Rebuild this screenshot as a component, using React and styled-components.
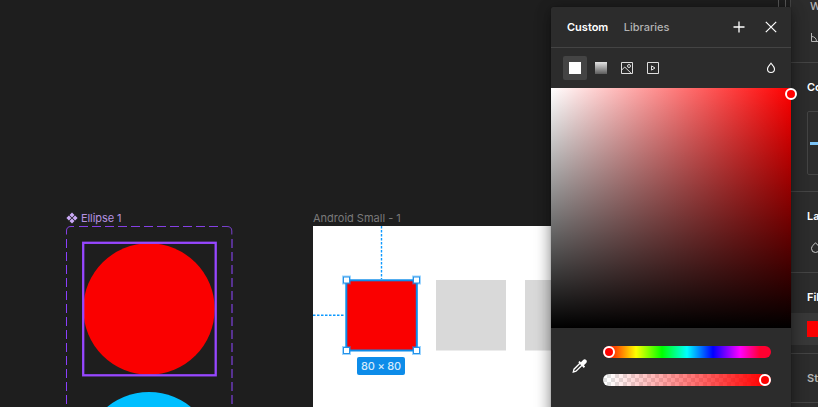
import React from "react";
import styled, { createGlobalStyle } from "styled-components";

const GlobalStyle = createGlobalStyle`
  * { box-sizing: border-box; }
  body {
    margin: 0;
    overflow: hidden;
    background: #1e1e1e;
    font-family: Inter, "Liberation Sans", sans-serif;
    font-size: 11px;
    line-height: 16px;
    color: #fff;
  }
`;

const Editor = styled.div`
  position: relative;
  display: flex;
  width: 818px;
  height: 407px;
  overflow: hidden;
`;

const Canvas = styled.main`
  position: relative;
  flex: none;
  width: 790px;
  height: 407px;
  background: #1e1e1e;
`;

const ScrollTrack = styled.div`
  position: absolute;
  left: 778px;
  top: 0;
  width: 8px;
  height: 407px;
  border: solid #575757;
  border-width: 0 1px;
`;

const NodeLabel = styled.div`
  position: absolute;
  display: flex;
  align-items: center;
  gap: 3px;
  left: ${(p) => p.$x}px;
  top: 210px;
  white-space: nowrap;
  color: ${(p) => p.$color};
  letter-spacing: ${(p) => p.$tracking || 0}px;
`;

const Overlay = styled.svg`
  position: absolute;
  left: 0;
  top: 0;
`;

const Frame = styled.section`
  position: absolute;
  left: 313px;
  top: 226px;
  width: 300px;
  height: 200px;
  padding: 54px 0 0 33px;
  display: flex;
  gap: 19.6px;
  background: #fff;
`;

const Square = styled.div`
  flex: none;
  width: 70px;
  height: 70px;
  background: ${(p) => p.$fill};
  box-shadow: 0 1px 0 ${(p) => (p.$soft ? "#ececec" : "transparent")};
`;

const SizeBadge = styled.div`
  position: absolute;
  left: 357px;
  top: 357px;
  width: 48px;
  height: 18px;
  border-radius: 2px;
  background: #0d8ce9;
  color: #d3eafb;
  text-align: center;
  line-height: 18px;
  font-size: 11px;
  font-weight: 500;
  letter-spacing: -0.2px;
  white-space: nowrap;
`;

const Picker = styled.section`
  position: absolute;
  left: 551px;
  top: 7px;
  width: 240px;
  height: 420px;
  display: flex;
  flex-direction: column;
  background: #2c2c2c;
  border-radius: 2px 2px 0 0;
  box-shadow: 0 2px 14px rgba(0, 0, 0, 0.3), 0 5px 17px rgba(0, 0, 0, 0.25), 0 0 1px rgba(0, 0, 0, 0.5);
`;

const PickerHeader = styled.header`
  display: flex;
  align-items: center;
  height: 41px;
  padding: 0 14px 0 16px;
  border-bottom: 1px solid #444;
`;

const Tab = styled.button`
  border: 0;
  padding: 0;
  margin-right: 15.5px;
  background: none;
  font: inherit;
  letter-spacing: ${(p) => (p.$active ? 0 : -0.02)}px;
  font-weight: ${(p) => (p.$active ? 600 : 500)};
  color: ${(p) => (p.$active ? "#fff" : "#b3b3b3")};
`;

const HeaderActions = styled.div`
  display: flex;
  gap: 20px;
  margin-left: auto;
`;

const PaintRow = styled.div`
  display: flex;
  align-items: center;
  gap: 2px;
  height: 40px;
  padding: 0 8px 0 12px;
`;

const PaintButton = styled.button`
  display: grid;
  place-items: center;
  width: 24px;
  height: 24px;
  padding: 0;
  border: 0;
  border-radius: 2px;
  margin-left: ${(p) => (p.$last ? "auto" : 0)};
  background: ${(p) => (p.$active ? "#444" : "transparent")};
`;

const Chip = styled.span`
  width: 12px;
  height: 12px;
  background: ${(p) => p.$fill};
`;

const ColorField = styled.div`
  position: relative;
  flex: none;
  height: 240px;
  background: linear-gradient(to top, #000, transparent),
    linear-gradient(to right, #fff, #f00);
`;

const Thumb = styled.span`
  position: absolute;
  left: ${(p) => p.$x}px;
  top: ${(p) => p.$y}px;
  width: 12px;
  height: 12px;
  border: 2px solid #fff;
  border-radius: 50%;
  background: #f00;
`;

const SliderArea = styled.div`
  display: flex;
  padding: 18px 20px 0;
`;

const Dropper = styled.svg`
  margin: 12px 15px 0 0;
`;

const Sliders = styled.div`
  display: flex;
  flex-direction: column;
  gap: 16px;
  width: 168px;
`;

const Slider = styled.div`
  position: relative;
  height: 12px;
  border-radius: 6px;
  background: ${(p) => p.$paint};
`;

const Sidebar = styled.aside`
  flex: none;
  width: 28px;
  height: 407px;
  display: flex;
  flex-direction: column;
  border-left: 1px solid #444;
  background: #2c2c2c;
`;

const Section = styled.section`
  flex: none;
  height: ${(p) => p.$height}px;
  padding: ${(p) => p.$top}px 0 0 16px;
  border-bottom: 1px solid #444;
  overflow: hidden;
  white-space: nowrap;
`;

const Heading = styled.h2`
  margin: 0;
  font-size: 11px;
  line-height: 16px;
  font-weight: 600;
  color: ${(p) => (p.$muted ? "#b3b3b3" : "#fff")};
`;

const FieldLabel = styled.div`
  margin: -2px 0 0 3px;
  font-weight: 500;
  color: #b3b3b3;
`;

const SideIcon = styled.svg`
  display: block;
  margin: ${(p) => p.$top}px 0 0 ${(p) => p.$left}px;
`;

const ConstraintBox = styled.div`
  display: flex;
  align-items: center;
  width: 64px;
  height: 64px;
  margin-top: 16px;
  padding-left: 2px;
  border: 1px solid #444;
  border-radius: 2px;
`;

const ConstraintBar = styled.span`
  width: 14px;
  height: 3px;
  background: #7cc4f8;
`;

const FillRow = styled.div`
  display: flex;
  align-items: center;
  height: 32px;
  margin: 8px 0 0 -16px;
  padding-left: 16px;
  background: #383838;
`;

const FillSwatch = styled.span`
  width: 16px;
  height: 16px;
  background: #fa0000;
`;

const HUES =
  "linear-gradient(to right, #f00 4px, #ff0 33px, #0f0 59px, #0ff 84px, #00f 110px, #f0f 137px, #ff0030 157px)";
const ALPHA =
  "linear-gradient(to right, rgba(255,0,0,0) 6px, #f00 162px), repeating-conic-gradient(#e1e1e1 0 25%, #fff 0 50%) 0 0 / 8px 8px";

function ComponentIcon() {
  return (
    <svg width="12" height="12" viewBox="0 0 12 12" fill="#cbaaf7">
      <path d="M6 .4 8.500 2.900 6 5.400 3.500 2.900zM6 6.600l2.500 2.500L6 11.600 3.500 9.100zM2.900 3.500 5.400 6 2.900 8.500.4 6zM9.100 3.500 11.600 6 9.100 8.500 6.600 6z" />
    </svg>
  );
}

function DropIcon() {
  return (
    <svg width="12" height="14" viewBox="0 0 12 14" fill="none" stroke="#fff" strokeWidth="1.100">
      <path d="M6 2.200C5 3.700 2.500 5.200 2.500 8a3.500 3.500 0 0 0 7 0C9.500 5.200 7 3.700 6 2.200Z" />
    </svg>
  );
}

const HANDLES = [[346.5, 280], [416.5, 280], [346.5, 350.5], [416.5, 350.5]];

function SelectionOverlay() {
  return (
    <Overlay width="790" height="407" fill="none">
      <path d="M381.500 226V279M313 315.200H345" stroke="#0d99ff" strokeWidth="1.400" strokeDasharray="2.500 1.500" />
      <rect x="346.300" y="280.300" width="70.500" height="70.200" stroke="#0d8ce9" strokeWidth="2" />
      {HANDLES.map(([x, y]) => (
        <g key={`${x}-${y}`}>
          <rect x={x - 4.5} y={y - 4.5} width="9" height="9" fill="#0d99ff" fillOpacity=".4" />
          <rect x={x - 3} y={y - 3} width="6" height="6" fill="#fff" stroke="#2592e8" />
        </g>
      ))}
    </Overlay>
  );
}

function ComponentSet() {
  return (
    <Overlay width="250" height="407" fill="none">
      <path d="M66.500 239V407" stroke="#8a3ffc" strokeDasharray="9 4" />
      <path d="M66.500 234.500V231Q66.500 226.500 71 226.500H74" stroke="#8540e4" />
      <path d="M79 226.500H224" stroke="#8540e4" strokeDasharray="9 4" />
      <path d="M222 226.500H227Q231.800 226.500 231.800 231V234.500" stroke="#7840cc" />
      <path d="M232 239V407" stroke="#573291" strokeWidth="2" strokeDasharray="9 4" />
      <circle cx="149" cy="309" r="65.700" fill="#fa0000" />
      <circle cx="149" cy="458" r="66" fill="#00bfff" />
      <rect x="83.200" y="242.800" width="132.500" height="132.500" stroke="#9747ff" strokeWidth="2.300" />
    </Overlay>
  );
}

function ColorPicker() {
  return (
    <Picker>
      <PickerHeader>
        <Tab $active>Custom</Tab>
        <Tab>Libraries</Tab>
        <HeaderActions>
          <svg width="12" height="12" fill="none" stroke="#fff">
            <path d="M.5 6H11.500M6 .5V11.500" strokeWidth="1.300" />
          </svg>
          <svg width="12" height="12" fill="none" stroke="#fff" strokeWidth="1.200">
            <path d="M.8.8 11.200 11.200M11.200.8.8 11.200" />
          </svg>
        </HeaderActions>
      </PickerHeader>
      <PaintRow>
        <PaintButton $active><Chip $fill="#fff" /></PaintButton>
        <PaintButton><Chip $fill="linear-gradient(#e4e4e4, #5c5c5c)" /></PaintButton>
        <PaintButton>
          <svg width="12" height="12" fill="none" stroke="#dedede">
            <path d="M.5.5h11v11H.5zM.7 8 3.700 5 10.200 11.300" />
            <circle cx="8" cy="4" r="1.500" />
          </svg>
        </PaintButton>
        <PaintButton>
          <svg width="12" height="12" fill="none" stroke="#dedede">
            <path d="M.5.5h11v11H.5zM4.500 3.900 8 6 4.500 8.100z" />
          </svg>
        </PaintButton>
        <PaintButton $last><DropIcon /></PaintButton>
      </PaintRow>
      <ColorField><Thumb $x={234} $y={0} /></ColorField>
      <SliderArea>
        <Dropper width="17" height="17" viewBox="0 0 17 17">
          <path d="M9 5.200 3 11.200 2.300 14l2.700-.8 6-6" fill="none" stroke="#fff" strokeWidth="1.300" />
          <path d="m7.300 4.300 1.300-1.300 1.300 1.200 2.200-2.300c2.200-1.800 5 .9 3.100 3.100L12.900 7.300l1.200 1.300-1.300 1.300z" fill="#fff" />
        </Dropper>
        <Sliders>
          <Slider $paint={HUES}><Thumb $x={0} $y={0} /></Slider>
          <Slider $paint={ALPHA}><Thumb $x={156} $y={0} /></Slider>
        </Sliders>
      </SliderArea>
    </Picker>
  );
}

function Properties() {
  return (
    <Sidebar>
      <Section $height={63} $top={0}>
        <FieldLabel>W</FieldLabel>
        <SideIcon $top={18} $left={4} width="12" height="12" fill="none" stroke="#b3b3b3">
          <path d="M.5 1V9.500H10M.5 4.500C3.500 4.500 5.500 6.500 5.500 9.500" />
        </SideIcon>
      </Section>
      <Section $height={129} $top={16}>
        <Heading>Constraints</Heading>
        <ConstraintBox><ConstraintBar /></ConstraintBox>
      </Section>
      <Section $height={81} $top={16}>
        <Heading>Layer</Heading>
        <SideIcon $top={17} $left={3} width="12" height="14" fill="none" stroke="#c8c8c8">
          <path d="M5.500 1.700C4.500 3.200 1.500 5 1.500 7.500a4 4 0 0 0 8 0C9.500 5 6.500 3.200 5.500 1.700Z" />
        </SideIcon>
      </Section>
      <Section $height={81} $top={16}>
        <Heading>Fill</Heading>
        <FillRow><FillSwatch /></FillRow>
      </Section>
      <Section $height={49} $top={16}>
        <Heading $muted>Stroke</Heading>
      </Section>
    </Sidebar>
  );
}

export default function App() {
  return (
    <>
      <GlobalStyle />
      <Editor>
        <Canvas>
          <ScrollTrack />
          <NodeLabel $x={66} $color="#b592e0" $tracking={-0.08}><ComponentIcon />Ellipse 1</NodeLabel>
          <ComponentSet />
          <NodeLabel $x={313} $color="#7a7a7a">Android Small - 1</NodeLabel>
          <Frame>
            <Square $fill="#fa0000" />
            <Square $fill="#d9d9d9" $soft />
            <Square $fill="#d9d9d9" $soft />
          </Frame>
          <SelectionOverlay />
          <SizeBadge>80 × 80</SizeBadge>
        </Canvas>
        <Properties />
        <ColorPicker />
      </Editor>
    </>
  );
}
